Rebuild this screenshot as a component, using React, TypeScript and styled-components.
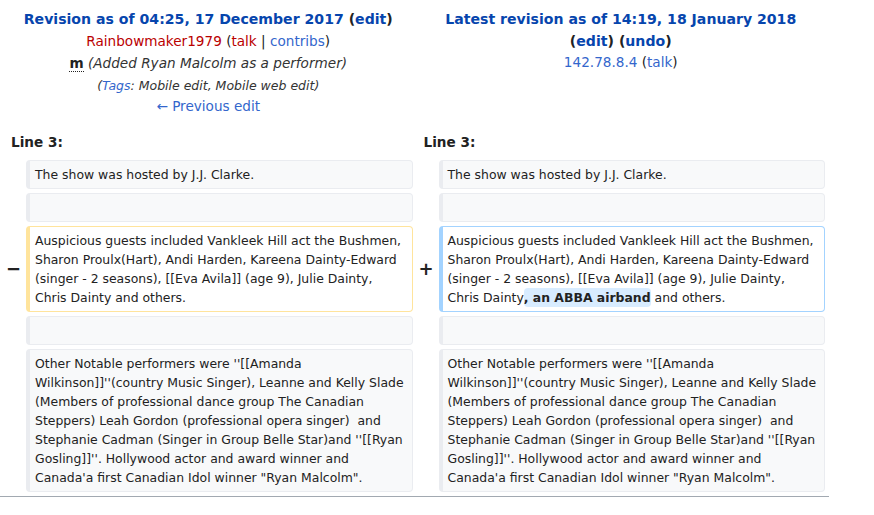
import React from "react";
import styled, { createGlobalStyle } from "styled-components";

const Global = createGlobalStyle`
  html, body { margin: 0; padding: 0; background: #fff; }
  body { font-family: "DejaVu Sans", sans-serif; color: #222; }
`;

const Page = styled.div`
  width: 829px;
  border-bottom: 1px solid #a2a9b1;
  padding-bottom: 4px;
`;

const Diff = styled.div`
  display: grid;
  grid-template-columns: 18px 1fr 18px 1fr;
  column-gap: 4px;
  row-gap: 4px;
  padding: 4px 4px 0 4px;
`;

const Title = styled.div`
  grid-column: span 2;
  text-align: center;
  font-size: 13.6px;
  padding-top: 5px;
  color: #222;
`;

const Line = styled.div<{ $small?: boolean; $h?: number }>`
  font-size: ${(p) => (p.$small ? "12.5px" : "13.6px")};
  line-height: ${(p) => (p.$h ? p.$h : 21.8)}px;
`;

const Strong = styled.span`
  font-weight: bold;
  font-size: 14.1px;
`;

const Link = styled.a<{ $red?: boolean; $dark?: boolean }>`
  color: ${(p) => (p.$red ? "#ba0000" : p.$dark ? "#0645ad" : "#3366cc")};
  text-decoration: none;
`;

const Abbr = styled.abbr`
  font-weight: bold;
  text-decoration: none;
  border-bottom: 1px dotted #222;
`;

const Comment = styled.span`
  font-style: italic;
  color: #333;
`;

const LineNo = styled.div`
  grid-column: span 2;
  font-weight: bold;
  font-size: 13.6px;
  line-height: 20px;
  padding: 10px 7px 4px;
`;

const Marker = styled.div`
  display: flex;
  align-items: center;
  justify-content: flex-end;
  font-weight: bold;
  font-size: 18px;
  color: #222;
  padding-right: 1px;
`;

const Cell = styled.div<{ $kind: "context" | "deleted" | "added" | "empty" }>`
  font-size: 12.43px;
  line-height: 19px;
  padding: 4px 5px 4px 5px;
  min-height: 19px;
  border-style: solid;
  border-width: 1px 1px 1px 4px;
  border-radius: 4px;
  color: #222;
  background: ${(p) => (p.$kind === "context" || p.$kind === "empty" ? "#f8f9fa" : "#fff")};
  border-color: ${(p) =>
    p.$kind === "deleted" ? "#ffe49c" : p.$kind === "added" ? "#a3d3ff" : "#eaecf0"};
  white-space: pre-wrap;
  word-wrap: break-word;
`;

const Ins = styled.span`
  background: #d8ecff;
  font-weight: bold;
  border-radius: 4px;
  padding: 2px 0;
`;

const showText = "The show was hosted by J.J. Clarke.";
const guestsOld =
  "Auspicious guests included Vankleek Hill act the Bushmen, Sharon Proulx(Hart), Andi Harden, Kareena Dainty-Edward (singer - 2 seasons), [[Eva Avila]] (age 9), Julie Dainty, Chris Dainty and others.";
const guestsNewA =
  "Auspicious guests included Vankleek Hill act the Bushmen, Sharon Proulx(Hart), Andi Harden, Kareena Dainty-Edward (singer - 2 seasons), [[Eva Avila]] (age 9), Julie Dainty, Chris Dainty";
const performers =
  "Other Notable performers were ''[[Amanda Wilkinson]]''(country Music Singer), Leanne and Kelly Slade (Members of professional dance group The Canadian Steppers) Leah Gordon (professional opera singer)  and Stephanie Cadman (Singer in Group Belle Star)and ''[[Ryan Gosling]]''. Hollywood actor and award winner and Canada'a first Canadian Idol winner \"Ryan Malcolm\".";

export default function App() {
  return (
    <>
      <Global />
      <Page>
        <Diff>
          <Title>
            <Line>
              <Strong>
                <Link $dark href="#">Revision as of 04:25, 17 December 2017</Link> (
                <Link $dark href="#">edit</Link>)
              </Strong>
            </Line>
            <Line $h={21.2}>
              <Link $red href="#">Rainbowmaker1979</Link> (<Link $red href="#">talk</Link> |{" "}
              <Link href="#">contribs</Link>)
            </Line>
            <Line $h={22.5}>
              <Abbr title="This is a minor edit">m</Abbr>{" "}
              <Comment>(Added Ryan Malcolm as a performer)</Comment>
            </Line>
            <Line $small $h={21.5}>
              <Comment>
                (<Link href="#">Tags</Link>: Mobile edit, Mobile web edit)
              </Comment>
            </Line>
            <Line>
              <Link href="#">← Previous edit</Link>
            </Line>
          </Title>
          <Title>
            <Line>
              <Strong>
                <Link $dark href="#">Latest revision as of 14:19, 18 January 2018</Link>
              </Strong>
            </Line>
            <Line $h={21.2}>
              <Strong>
                (<Link $dark href="#">edit</Link>) (<Link $dark href="#">undo</Link>)
              </Strong>
            </Line>
            <Line>
              <Link href="#">142.78.8.4</Link> (<Link href="#">talk</Link>)
            </Line>
          </Title>

          <LineNo>Line 3:</LineNo>
          <LineNo>Line 3:</LineNo>

          <Marker />
          <Cell $kind="context">{showText}</Cell>
          <Marker />
          <Cell $kind="context">{showText}</Cell>

          <Marker />
          <Cell $kind="empty"></Cell>
          <Marker />
          <Cell $kind="empty"></Cell>

          <Marker>−</Marker>
          <Cell $kind="deleted">{guestsOld}</Cell>
          <Marker>+</Marker>
          <Cell $kind="added">
            {guestsNewA}
            <Ins>, an ABBA airband</Ins> and others.
          </Cell>

          <Marker />
          <Cell $kind="empty"></Cell>
          <Marker />
          <Cell $kind="empty"></Cell>

          <Marker />
          <Cell $kind="context">{performers}</Cell>
          <Marker />
          <Cell $kind="context">{performers}</Cell>
        </Diff>
      </Page>
    </>
  );
}
